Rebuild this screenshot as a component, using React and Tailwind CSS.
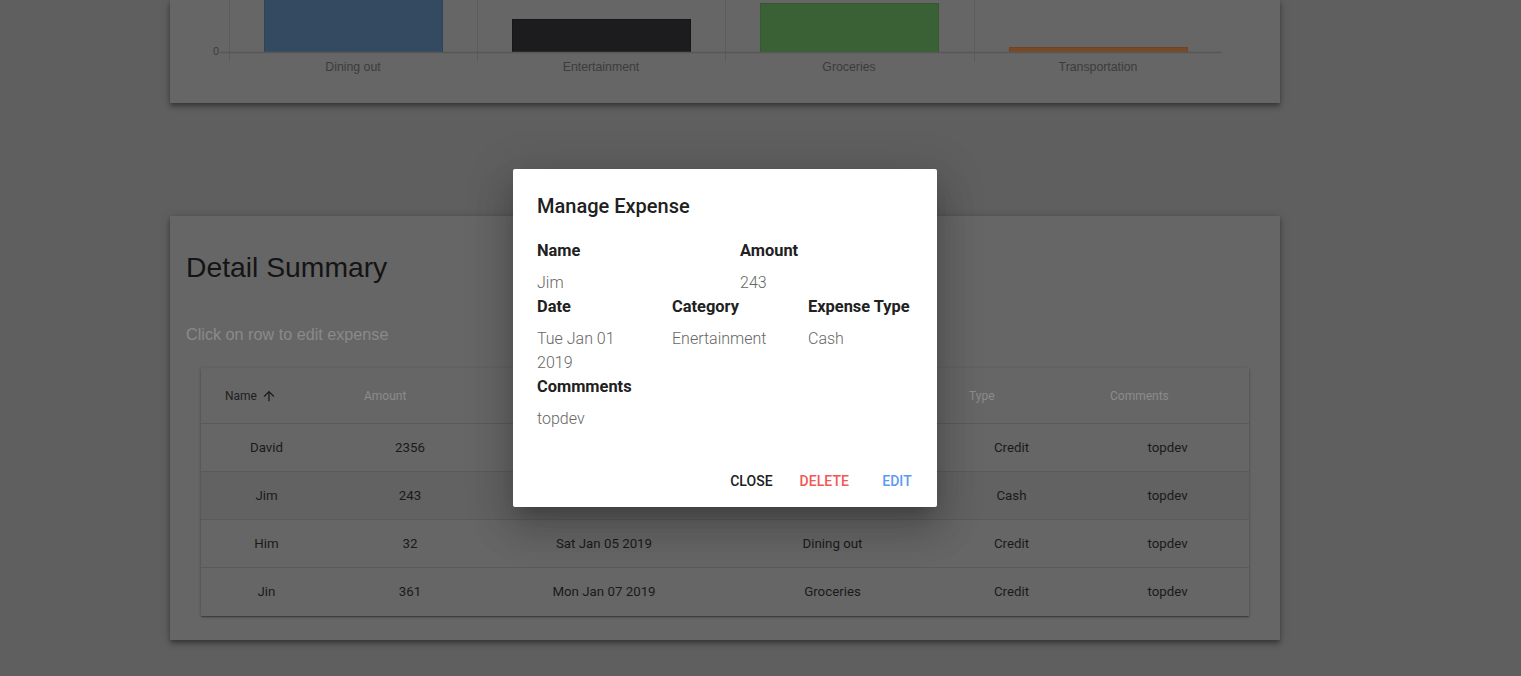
import React from "react";

const rows = [
  ["David", "2356", "", "", "Credit", "topdev"],
  ["Jim", "243", "", "", "Cash", "topdev"],
  ["Him", "32", "Sat Jan 05 2019", "Dining out", "Credit", "topdev"],
  ["Jin", "361", "Mon Jan 07 2019", "Groceries", "Credit", "topdev"],
];

function Chart() {
  const grid = [59, 307, 555, 804];
  const bars = [
    { x: 94, y: -10, fill: "#334a61", stroke: "#2e4357" },
    { x: 342, y: 19, fill: "#1c1c1e", stroke: "#161618" },
    { x: 590, y: 3, fill: "#3a6035", stroke: "#355830" },
    { x: 839, y: 47, fill: "#7a4a26", stroke: "#704422" },
  ];
  const labels = [
    [183, "Dining out"],
    [431, "Entertainment"],
    [679, "Groceries"],
    [928, "Transportation"],
  ];
  return (
    <svg width="1110" height="103" className="block">
      {grid.map((x) => (
        <line key={x} x1={x + 0.5} x2={x + 0.5} y1="0" y2="62" stroke="#5c5c5c" strokeWidth="1" />
      ))}
      {bars.map((b) => (
        <rect key={b.x} x={b.x + 0.5} y={b.y + 0.5} width="178" height={52 - b.y} fill={b.fill} stroke={b.stroke} strokeWidth="1" />
      ))}
      <line x1="50" x2="1052" y1="52.5" y2="52.5" stroke="#575757" strokeWidth="1.5" />
      <text x="49" y="55" textAnchor="end" fontSize="11" fill="#3c3c3c" fontFamily="'Liberation Sans', Arial, sans-serif">0</text>
      {labels.map(([x, t]) => (
        <text key={t} x={x} y="71" textAnchor="middle" fontSize="12.3" fill="#3c3c3c" fontFamily="'Liberation Sans', Arial, sans-serif">
          {t}
        </text>
      ))}
    </svg>
  );
}

const cellPad = ["pl-6 pr-8", "pl-6 pr-8", "pl-6 pr-8", "pl-6 pr-8", "pl-6 pr-8", "pl-6 pr-6"];

function Table() {
  const headers = ["Name", "Amount", "", "", "Type", "Comments"];
  return (
    <div className="mx-[31px] bg-[#666666] shadow-[0_1px_3px_rgba(0,0,0,0.25),0_1px_1px_rgba(0,0,0,0.16),0_2px_1px_-1px_rgba(0,0,0,0.12)] font-['Roboto',sans-serif]">
      <div className="grid grid-cols-[139px_148px_240px_217px_141px_163px] h-14 border-b border-[#5a5a5a] items-center">
        {headers.map((h, i) => (
          <div key={i} className={`${cellPad[i]} text-[12px] ${i === 0 ? "text-[#1e1e1e]" : "text-[#8c8c8c]"} flex items-center`}>
            {h}
            {i === 0 && (
              <svg width="16" height="16" viewBox="0 0 24 24" className="ml-1" fill="#1e1e1e">
                <path d="M4 12l1.41 1.41L11 7.83V20h2V7.83l5.58 5.59L20 12l-8-8-8 8z" />
              </svg>
            )}
          </div>
        ))}
      </div>
      {rows.map((r, ri) => (
        <div
          key={ri}
          className={`grid grid-cols-[139px_148px_240px_217px_141px_163px] h-12 items-center ${ri < 3 ? "border-b border-[#5a5a5a]" : ""} ${ri === 1 ? "bg-[#626262]" : ""}`}
        >
          {r.map((c, ci) => (
            <div key={ci} className={`${cellPad[ci]} text-center text-[13.3px] text-[#1a1a1a]`}>
              {c}
            </div>
          ))}
        </div>
      ))}
    </div>
  );
}

function Field({ label, value, valueClass = "" }) {
  return (
    <div>
      <div className="text-[16.4px] leading-6 font-bold text-[#212121]">{label}</div>
      <div className={`mt-2 text-[16px] leading-6 font-light text-[#666666] ${valueClass}`}>{value}</div>
    </div>
  );
}

function Dialog() {
  return (
    <div className="absolute left-[513px] top-[169px] w-[424px] bg-white rounded-[2px] font-['Roboto',sans-serif] shadow-[0_11px_15px_-7px_rgba(0,0,0,0.2),0_24px_38px_3px_rgba(0,0,0,0.14),0_9px_46px_8px_rgba(0,0,0,0.12)]">
      <div className="px-6 pt-[21px] h-[54px] text-[20px] leading-8 font-medium text-[#212121]">Manage Expense</div>
      <div className="px-6 pt-[16px] pb-[24px]">
        <div className="flex">
          <div className="w-[203px] shrink-0">
            <Field label="Name" value="Jim" />
          </div>
          <div className="w-[170px] shrink-0">
            <Field label="Amount" value="243" />
          </div>
        </div>
        <div className="flex">
          <div className="w-[135px] shrink-0">
            <Field label="Date" value="Tue Jan 01 2019" valueClass="w-[105px]" />
          </div>
          <div className="w-[136px] shrink-0">
            <Field label="Category" value="Enertainment" />
          </div>
          <div className="w-[110px] shrink-0 whitespace-nowrap">
            <Field label="Expense Type" value="Cash" />
          </div>
        </div>
        <Field label="Commments" value="topdev" />
      </div>
      <div className="flex justify-end p-2 gap-2">
        <button className="h-9 min-w-16 px-2 text-[14px] font-medium uppercase tracking-[0.005em] text-[#212121]">Close</button>
        <button className="h-9 min-w-16 px-2 text-[14px] font-medium uppercase tracking-[0.005em] text-[#f25656]">Delete</button>
        <button className="h-9 min-w-16 px-2 text-[14px] font-medium uppercase tracking-[0.005em] text-[#5a9af4]">Edit</button>
      </div>
    </div>
  );
}

export default function App() {
  return (
    <div className="relative w-[1521px] h-[676px] overflow-hidden bg-[#5f5f5f]">
      <div className="ml-[170px] w-[1110px] h-[103px] bg-[#666666] shadow-[0_2px_4px_-1px_rgba(0,0,0,0.3),0_4px_5px_0_rgba(0,0,0,0.2),0_1px_10px_0_rgba(0,0,0,0.15)]">
        <Chart />
      </div>
      <div className="ml-[170px] mt-[113px] w-[1110px] h-[424px] bg-[#666666] pt-[31px] shadow-[0_2px_4px_-1px_rgba(0,0,0,0.3),0_4px_5px_0_rgba(0,0,0,0.2),0_1px_10px_0_rgba(0,0,0,0.15)]">
        <div className="pl-[16px] h-10 leading-10 text-[28.3px] text-[#141414] font-['Liberation_Sans',Arial,sans-serif]">Detail Summary</div>
        <div className="pl-[16px] mt-[35px] h-6 leading-6 text-[16.2px] text-[#8a8a8a] font-['Liberation_Sans',Arial,sans-serif]">Click on row to edit expense</div>
        <div className="mt-[22px]">
          <Table />
        </div>
      </div>
      <Dialog />
    </div>
  );
}
